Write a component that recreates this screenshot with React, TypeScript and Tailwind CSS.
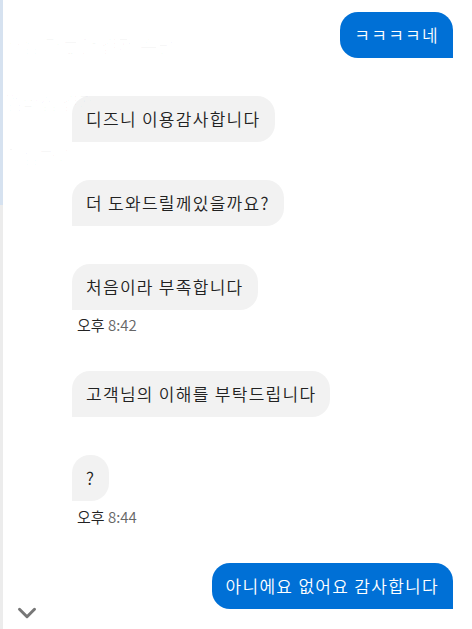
import { ChevronDown } from 'lucide-react';

type Msg =
    | { kind: 'me'; text: string; mt: string }
    | { kind: 'them'; text: string; mt: string }
    | { kind: 'time'; text: string; mt: string };

const messages: Msg[] = [
    { kind: 'me', text: 'ㅋㅋㅋㅋ네', mt: 'mt-[12px]' },
    { kind: 'them', text: '디즈니 이용감사합니다', mt: 'mt-[38px]' },
    { kind: 'them', text: '더 도와드릴께있을까요?', mt: 'mt-[38px]' },
    { kind: 'them', text: '처음이라 부족합니다', mt: 'mt-[38px]' },
    { kind: 'time', text: '8:42', mt: 'mt-[5px]' },
    { kind: 'them', text: '고객님의 이해를 부탁드립니다', mt: 'mt-[36px]' },
    { kind: 'them', text: '?', mt: 'mt-[38px]' },
    { kind: 'time', text: '8:44', mt: 'mt-[6px]' },
    { kind: 'me', text: '아니에요 없어요 감사합니다', mt: 'mt-[36px]' },
];

const font = { fontFamily: '"Noto Sans CJK KR", "Noto Sans", sans-serif' };

export default function App() {
    return (
        <div className="flex h-[629px] w-[472px] overflow-hidden bg-white" style={font}>
            <div className="flex w-[3px] flex-col">
                <div className="h-[205px] bg-[#d6e2f0]" />
                <div className="flex-1 bg-[#ececec]" />
            </div>
            <div className="relative flex-1">
                {/* faint text showing through from the page behind */}
                <div className="pointer-events-none absolute left-[2px] top-0 text-[19px] font-light text-[#000]/[0.03]">
                    <div className="mt-[31px]">사용 가능한 결제 수단</div>
                    <div className="mt-[28px]">멤버십 결제</div>
                    <div className="mt-[26px]">이동하기</div>
                </div>

                <div className="flex flex-col pl-[69px] pr-[19px]">
                    {messages.map((m, i) => {
                        if (m.kind === 'time') {
                            return (
                                <div key={i} className={`${m.mt} pl-[5px] text-[15px] font-[350] leading-5`}>
                                    <span className="text-[#222]">오후 </span>
                                    <span className="text-[#666]">{m.text}</span>
                                </div>
                            );
                        }
                        if (m.kind === 'me') {
                            return (
                                <div key={i} className={`${m.mt} flex justify-end`}>
                                    <div className="rounded-[18px] rounded-br-none bg-[#0070d6] px-[14px] py-[11px] text-[17px] font-[350] leading-6 tracking-[1.3px] text-white">
                                        {m.text}
                                    </div>
                                </div>
                            );
                        }
                        return (
                            <div key={i} className={`${m.mt} flex justify-start`}>
                                <div className="rounded-[18px] rounded-bl-none bg-[#f2f2f2] px-[14px] py-[11px] text-[17px] font-[350] leading-6 tracking-[1.3px] text-[#222]">
                                    {m.text}
                                </div>
                            </div>
                        );
                    })}
                </div>

                <div className="absolute bottom-[1px] left-[9px] text-[#777]">
                    <ChevronDown size={30} strokeWidth={2.4} />
                </div>
            </div>
        </div>
    );
}
